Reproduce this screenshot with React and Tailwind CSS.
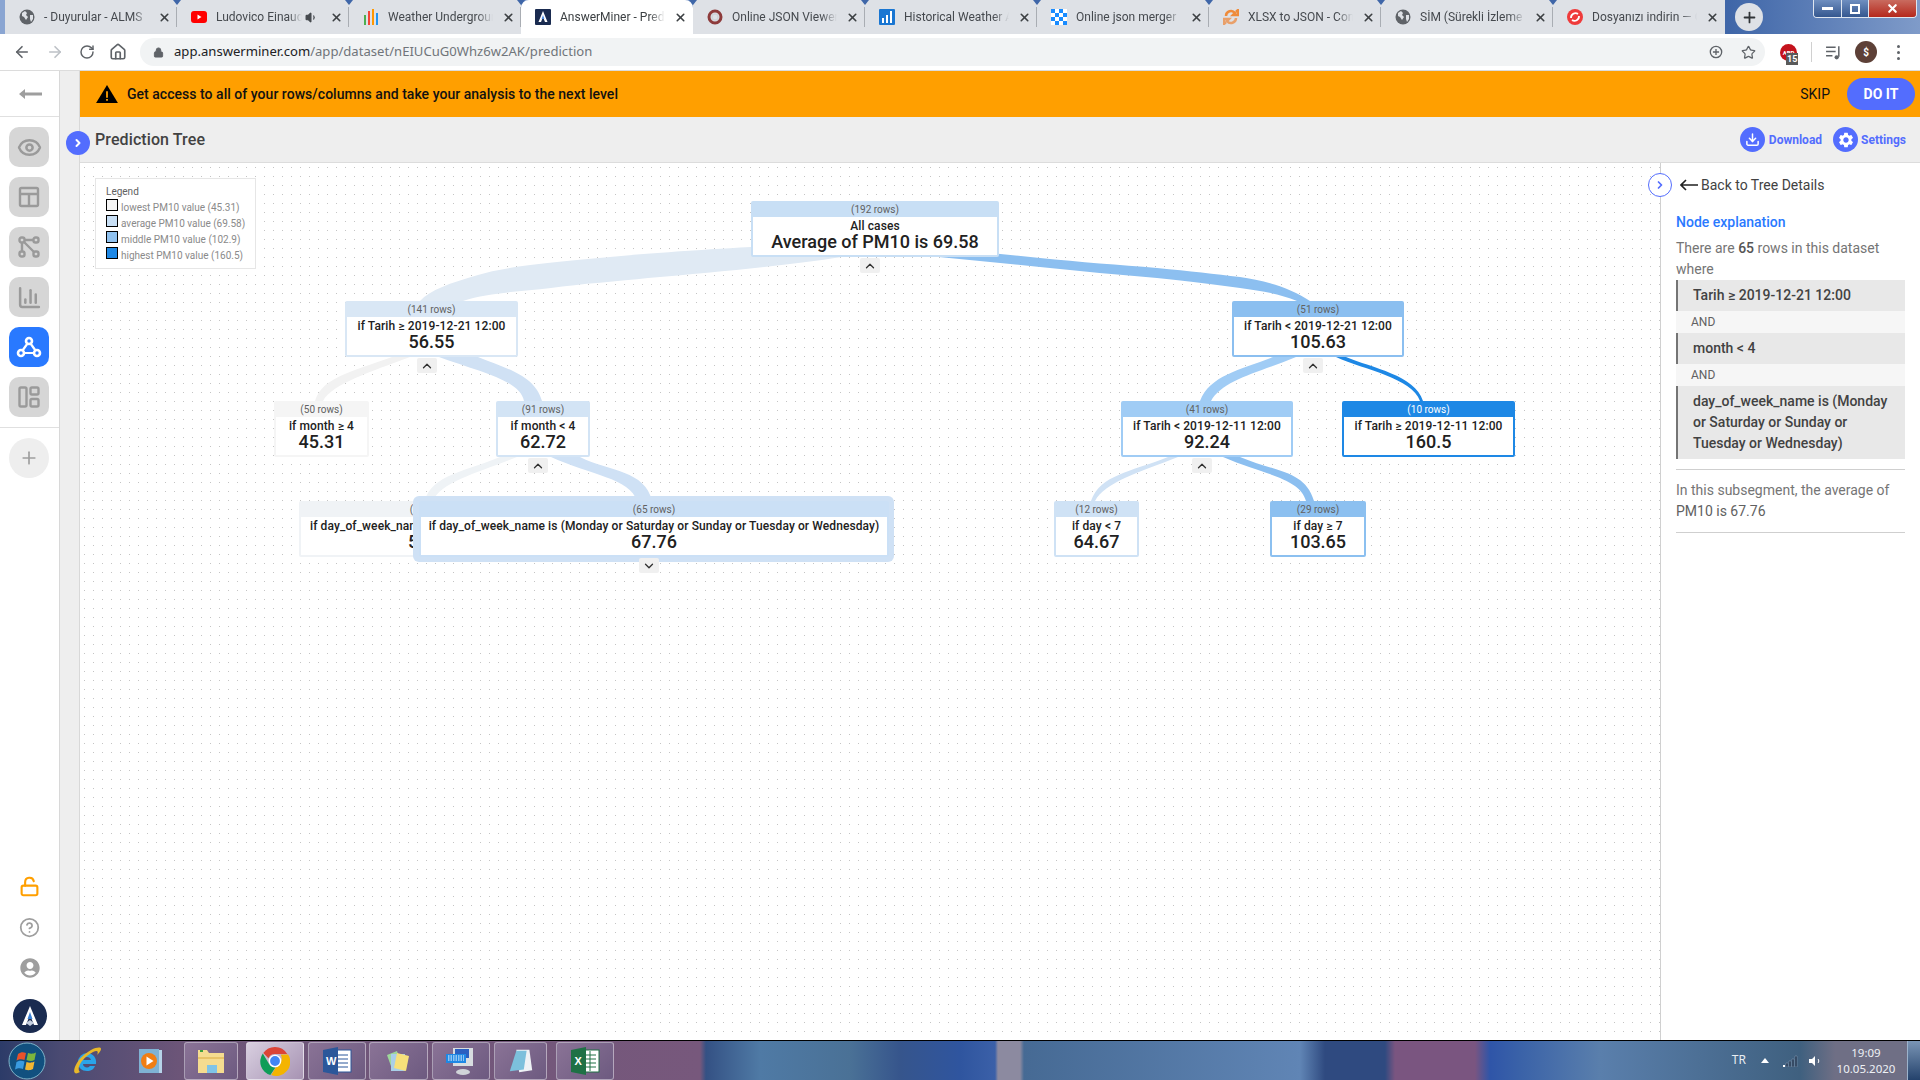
import React from 'react'
import { ArrowLeft, ArrowRight, RotateCw, Home, Lock, Star, X, Plus, ChevronRight, ChevronUp, ChevronDown, Eye, ChartColumn, HelpCircle, Volume1, LockOpen, Download } from 'lucide-react'
import { FaUserCircle } from 'react-icons/fa'
import { MdSettings } from 'react-icons/md'

const Globe = () => (
  <svg viewBox="0 0 16 16" className="w-4 h-4"><circle cx="8" cy="8" r="7.5" fill="#5f6368" /><path d="M3 4l3-2 2 2-1 2 2 2-2 3-2-3-2-1zM11 6l3 0 0 4-2 3-1-3z" fill="#dee1e6" /></svg>
)
const YouTube = () => (
  <svg viewBox="0 0 16 16" className="w-4 h-4"><rect x="0" y="2" width="16" height="12" rx="3" fill="#f00" /><path d="M6.5 5.5l4 2.5-4 2.5z" fill="#fff" /></svg>
)
const BarsColor = () => (
  <svg viewBox="0 0 16 16" className="w-4 h-4"><rect x="1" y="6" width="2" height="10" fill="#4caf50" /><rect x="5" y="2" width="2" height="14" fill="#f44336" /><rect x="9" y="0" width="2" height="16" fill="#ff9800" /><rect x="13" y="4" width="2" height="12" fill="#2196f3" /></svg>
)
const AmLogo = ({ size = 'w-4 h-4' }) => (
  <svg viewBox="0 0 16 16" className={size}><rect width="16" height="16" rx="1" fill="#1a2b50" /><path d="M8 2l4.5 11H10L8 8 6 13H3.5z" fill="#fff" /><path d="M8 6l1.4 4H6.600z" fill="#4f8fe6" /></svg>
)
const OperaRing = () => (
  <svg viewBox="0 0 16 16" className="w-4 h-4"><circle cx="8" cy="8" r="6" fill="none" stroke="#8d3b3b" strokeWidth="3" /><circle cx="8" cy="8" r="3" fill="none" stroke="#cfd3d8" strokeWidth="1.5" /></svg>
)
const BlueBars = () => (
  <svg viewBox="0 0 16 16" className="w-4 h-4"><rect width="16" height="16" rx="1" fill="#1976d2" /><rect x="3" y="9" width="2" height="5" fill="#fff" /><rect x="7" y="6" width="2" height="8" fill="#fff" /><rect x="11" y="2" width="2" height="12" fill="#fff" /></svg>
)
const Checker = () => (
  <svg viewBox="0 0 16 16" className="w-4 h-4"><rect width="16" height="16" fill="#fff" /><path d="M0 0h4v4H0zM8 0h4v4H8zM4 4h4v4H4zM12 4h4v4h-4zM0 8h4v4H0zM8 8h4v4H8zM4 12h4v4H4zM12 12h4v4h-4z" fill="#1a8cff" /></svg>
)
const OrangeSync = () => (
  <svg viewBox="0 0 16 16" className="w-4 h-4"><path d="M3 7a5 5 0 0 1 9-3l-2 2h5V1l-2 2" fill="none" stroke="#ef8b3a" strokeWidth="2.500" /><path d="M13 9a5 5 0 0 1-9 3l2-2H1v5l2-2" fill="none" stroke="#e9a06a" strokeWidth="2.500" /></svg>
)
const RedSync = () => (
  <svg viewBox="0 0 16 16" className="w-4 h-4"><circle cx="8" cy="8" r="8" fill="#ef3b3b" /><path d="M4 9a4.500 4.500 0 0 1 7-4M12 7a4.500 4.500 0 0 1-7 4" fill="none" stroke="#fff" strokeWidth="1.800" /></svg>
)

const tabs = [
  { title: '- Duyurular - ALMS', icon: <Globe /> },
  { title: 'Ludovico Einaudi', icon: <YouTube />, audio: true },
  { title: 'Weather Underground', icon: <BarsColor /> },
  { title: 'AnswerMiner - Prediction', icon: <AmLogo />, active: true },
  { title: 'Online JSON Viewer', icon: <OperaRing /> },
  { title: 'Historical Weather API', icon: <BlueBars /> },
  { title: 'Online json merger', icon: <Checker /> },
  { title: 'XLSX to JSON - Convert', icon: <OrangeSync /> },
  { title: 'SİM (Sürekli İzleme Merkezi)', icon: <Globe /> },
  { title: 'Dosyanızı indirin — Online', icon: <RedSync /> },
]

function Tab({ tab, last }) {
  return (
    <div className={`relative w-[172px] h-[34px] shrink-0 flex items-center pl-[14px] pr-[6px] text-[12px] font-['Roboto',sans-serif] ${tab.active ? 'bg-white rounded-t-[8px] text-[#3c4043] z-10' : 'bg-[#dee1e6] text-[#45494e]'}`}>
      <span className="shrink-0 w-4 h-4">{tab.icon}</span>
      <span className={`ml-[9px] whitespace-nowrap overflow-hidden [mask-image:linear-gradient(to_right,black_85%,transparent)] ${tab.audio ? 'w-[86px]' : 'w-[105px]'}`}>{tab.title}</span>
      {tab.audio && <Volume1 className="w-[13px] h-[13px] ml-[3px] shrink-0 text-[#45494e]" fill="#45494e" />}
      <X className="w-[13px] h-[13px] ml-auto shrink-0 text-[#3c4043]" strokeWidth={3} />
      {!last && !tab.active && <span className="absolute right-0 top-[7px] h-[20px] w-px bg-[#a9adb3]" />}
      {!last && <span className="absolute right-[-4px] top-0 w-0 h-0 border-x-[4px] border-x-transparent border-t-[5px] border-t-[#3f66a8] z-20" />}
    </div>
  )
}

function TabBar() {
  return (
    <div className="h-[34px] flex items-start pl-[5px] bg-[linear-gradient(to_right,#8aa5d2_0%,#8aa5d2_1%,#3f66a8_90%,#7f9bc9_100%)]">
      {tabs.map((t, i) => <Tab key={i} tab={t} last={i === tabs.length - 1} />)}
      <div className="ml-[10px] mt-[3px] w-[28px] h-[28px] rounded-full bg-[#dee1e6] flex items-center justify-center">
        <Plus className="w-[17px] h-[17px] text-[#303438]" strokeWidth={2.5} />
      </div>
      <div className="ml-auto mr-[3px] h-[18px] flex rounded-b-[4px] border border-t-0 border-[#dfe6f0] overflow-hidden">
        <div className="w-[28px] bg-[linear-gradient(#6f8fc0,#35578f)] flex items-center justify-center border-r border-[#dfe6f0]"><span className="w-[11px] h-[3px] bg-white" /></div>
        <div className="w-[27px] bg-[linear-gradient(#6f8fc0,#35578f)] flex items-center justify-center border-r border-[#dfe6f0]"><span className="w-[10px] h-[10px] border-2 border-white" /></div>
        <div className="w-[47px] bg-[linear-gradient(#c96b5f,#b5281c)] flex items-center justify-center"><X className="w-[13px] h-[13px] text-white" strokeWidth={4} /></div>
      </div>
    </div>
  )
}

function Toolbar() {
  return (
    <div className="h-[37px] bg-white border-b border-[#dcdcdc] flex items-center text-[#5f6368]">
      <ArrowLeft className="w-[18px] h-[18px] ml-[13px]" strokeWidth={2.2} />
      <ArrowRight className="w-[18px] h-[18px] ml-[15px] text-[#bdc1c6]" strokeWidth={2.2} />
      <RotateCw className="w-[16px] h-[16px] ml-[15px]" strokeWidth={2.2} />
      <Home className="w-[18px] h-[18px] ml-[14px]" strokeWidth={2.2} />
      <div className="ml-[13px] w-[1625px] h-[28px] rounded-full bg-[#f1f3f4] flex items-center pl-[13px] pr-[9px] font-['Noto_Sans',sans-serif]">
        <Lock className="w-[11px] h-[11px] text-[#5f6368]" fill="#5f6368" />
        <span className="ml-[10px] text-[13.1px] text-[#202124]">app.answerminer.com<span className="text-[#70757a]">/app/dataset/nEIUCuG0Whz6w2AK/prediction</span></span>
        <span className="ml-auto flex items-center gap-[18px]">
          <svg viewBox="0 0 16 16" className="w-[14px] h-[14px]"><circle cx="8" cy="8" r="6.500" fill="none" stroke="#5f6368" strokeWidth="1.500" /><path d="M8 4.500v7M4.500 8h7" stroke="#5f6368" strokeWidth="1.500" /></svg>
          <Star className="w-[15px] h-[15px] text-[#5f6368]" strokeWidth={2} />
        </span>
      </div>
      <div className="relative ml-[15px] w-[17px] h-[17px] rounded-full bg-[#c4121c] flex items-center justify-center">
        <span className="text-[6px] font-bold text-white">ABP</span>
        <span className="absolute left-[6px] top-[9px] px-[1px] bg-[#5a5a5a] text-white text-[9px] leading-[12px] font-bold">15</span>
      </div>
      <span className="ml-[14px] h-[20px] w-px bg-[#d0d0d0]" />
      <svg viewBox="0 0 16 16" className="w-[17px] h-[17px] ml-[13px]"><path d="M1 3h9M1 7h9M1 11h6" stroke="#5f6368" strokeWidth="1.400" /><path d="M13 2v10" stroke="#5f6368" strokeWidth="1.400" /><circle cx="11" cy="12.500" r="2" fill="#5f6368" /></svg>
      <div className="ml-[13px] w-[22px] h-[22px] rounded-full bg-[#5d4037] flex items-center justify-center text-white text-[10px] font-bold">$</div>
      <div className="ml-[20px] flex flex-col gap-[3px]">
        <span className="w-[3px] h-[3px] rounded-full bg-[#5f6368]" />
        <span className="w-[3px] h-[3px] rounded-full bg-[#5f6368]" />
        <span className="w-[3px] h-[3px] rounded-full bg-[#5f6368]" />
      </div>
    </div>
  )
}

function SideBtn({ active, children }) {
  return (
    <div className={`w-[40px] h-[40px] rounded-[10px] flex items-center justify-center ${active ? 'bg-[#2979ff] text-white' : 'bg-[#d6d6d6] text-[#9a9a9a]'}`}>
      {children}
    </div>
  )
}

function Sidebar() {
  return (
    <div className="w-[60px] shrink-0 bg-white border-r border-[#d8d8d8] flex flex-col">
      <div className="h-[46px] border-b border-[#e0e0e0] flex items-center justify-center">
        <svg viewBox="0 0 24 12" className="w-[24px] h-[12px]"><path d="M7 1L1 6l6 5V7.500h17v-3H7z" fill="#9e9e9e" /></svg>
      </div>
      <div className="pt-[10px] pl-[9px] flex flex-col gap-[10px]">
        <SideBtn><Eye className="w-[25px] h-[25px]" strokeWidth={2.4} /></SideBtn>
        <SideBtn>
          <svg viewBox="0 0 24 24" className="w-[24px] h-[24px]" fill="none" stroke="currentColor" strokeWidth="2.400"><rect x="3" y="3" width="18" height="18" rx="1.500" /><path d="M3 9h18M12 9v12" /></svg>
        </SideBtn>
        <SideBtn>
          <svg viewBox="0 0 24 24" className="w-[24px] h-[24px]" fill="none" stroke="currentColor" strokeWidth="2.400"><rect x="2.500" y="2.500" width="5" height="5" rx="2" /><rect x="16.500" y="2.500" width="5" height="5" rx="2" /><rect x="2.500" y="16.500" width="5" height="5" rx="2" /><rect x="16.500" y="16.500" width="5" height="5" rx="2" /><path d="M7.500 5h9M5 7.500v9M7 7l10 10" /></svg>
        </SideBtn>
        <SideBtn><ChartColumn className="w-[25px] h-[25px]" strokeWidth={2.4} /></SideBtn>
        <SideBtn active>
          <svg viewBox="0 0 26 24" className="w-[26px] h-[24px]" fill="none" stroke="currentColor" strokeWidth="2.600"><circle cx="13" cy="6" r="3" /><circle cx="5" cy="18" r="3" /><circle cx="21" cy="18" r="3" /><path d="M11.500 8.500L6.500 15.500M14.500 8.500l5 7M8 18h10" strokeWidth="2.200" /></svg>
        </SideBtn>
        <SideBtn>
          <svg viewBox="0 0 24 24" className="w-[24px] h-[24px]" fill="none" stroke="currentColor" strokeWidth="2.400"><rect x="2.500" y="2.500" width="7" height="19" rx="1.500" /><rect x="13.500" y="2.500" width="8" height="7" rx="1.500" /><rect x="13.500" y="14" width="8" height="7.500" rx="1.500" /></svg>
        </SideBtn>
      </div>
      <div className="mt-[10px] border-t border-[#e0e0e0] pt-[10px] pl-[9px]">
        <div className="w-[40px] h-[40px] rounded-full bg-[#eeeeee] flex items-center justify-center">
          <Plus className="w-[20px] h-[20px] text-[#9e9e9e]" strokeWidth={2} />
        </div>
      </div>
      <div className="mt-auto pb-[7px] flex flex-col items-center gap-[20px]">
        <LockOpen className="w-[21px] h-[21px] text-[#ff9f00]" strokeWidth={2.4} />
        <HelpCircle className="w-[21px] h-[21px] text-[#9e9e9e]" strokeWidth={2} />
        <FaUserCircle className="w-[20px] h-[20px] text-[#9e9e9e]" />
        <div className="w-[34px] h-[34px] rounded-full bg-[#1a2b50] flex items-center justify-center mt-px">
          <svg viewBox="0 0 20 22" className="w-[20px] h-[22px]"><path d="M10 1l8 19h-4L10 10 6 20H2z" fill="#fff" /><path d="M10 7l2.500 7h-5z" fill="#3b82d6" /><path d="M6 18l4-3 4 3-4 3z" fill="#c5cfe0" /></svg>
        </div>
      </div>
    </div>
  )
}

const links = [
  ['M751 247C680 251 640 254 599 258C540 263 500 268 478 275C450 283 430 290 420 301L463 301C490 292 520 292 551 288C580 284 620 281 648 278C720 272 790 265 842 257Z', '#e0eaf4'],
  ['M960 250L1040 258C1080 262 1120 265 1157 268C1190 271 1215 274 1240 277C1262 280 1290 287 1310 301L1297 301C1280 294 1262 291 1240 288C1215 285 1190 281 1157 278C1120 275 1080 271 1040 267L939 257Z', '#8cbff0'],
  ['M392 357C350 372 322 378 315 401L323 401C332 384 370 372 410 357Z', '#f2f2f2'],
  ['M439 357C480 372 520 380 524 401L542 401C535 375 505 368 478 357Z', '#d0e1f4'],
  ['M500 457C470 470 430 475 425 501L433 501C440 482 480 472 517 457Z', '#eff3f6'],
  ['M551 457C590 475 630 478 637 501L652 501C645 470 610 472 580 457Z', '#cfe1f5'],
  ['M1273 357C1240 370 1210 375 1200 401L1211 401C1222 380 1260 372 1296 357Z', '#a0ccf5'],
  ['M1336 357C1365 370 1412 378 1420 401L1423 401C1415 375 1372 368 1346 357Z', '#1e88e5'],
  ['M1168 457C1130 472 1100 475 1091 501L1095 501C1105 482 1140 472 1178 457Z', '#d0e2f5'],
  ['M1223 457C1265 475 1300 478 1306 501L1314 501C1305 470 1275 472 1240 457Z', '#8cbff0'],
]

const nodes = [
  { rows: '192 rows', label: 'All cases', value: 'Average of PM10 is 69.58', pos: 'left-[671px] top-[38px] w-[248px]', border: 'border-[#c8dff5]', head: 'bg-[#c8dff5]' },
  { rows: '141 rows', label: 'if Tarih ≥ 2019-12-21 12:00', value: '56.55', pos: 'left-[265px] top-[138px] w-[173px]', border: 'border-[#d9e7f5]', head: 'bg-[#d9e7f5]' },
  { rows: '50 rows', label: 'if month ≥ 4', value: '45.31', pos: 'left-[194px] top-[238px] w-[95px]', border: 'border-[#f5f5f5]', head: 'bg-[#f5f5f5]' },
  { rows: '91 rows', label: 'if month < 4', value: '62.72', pos: 'left-[416px] top-[238px] w-[94px]', border: 'border-[#d3e4f5]', head: 'bg-[#d3e4f5]' },
  { rows: '26 rows', label: 'if day_of_week_name is (Friday or Thursday)', value: '50.12', pos: 'left-[219px] top-[338px] w-[264px]', border: 'border-[#f0f3f6]', head: 'bg-[#f0f3f6]' },
  { rows: '51 rows', label: 'if Tarih < 2019-12-21 12:00', value: '105.63', pos: 'left-[1152px] top-[138px] w-[172px]', border: 'border-[#8bbff0]', head: 'bg-[#8bbff0]' },
  { rows: '41 rows', label: 'if Tarih < 2019-12-11 12:00', value: '92.24', pos: 'left-[1041px] top-[238px] w-[172px]', border: 'border-[#a0ccf5]', head: 'bg-[#a0ccf5]' },
  { rows: '10 rows', label: 'if Tarih ≥ 2019-12-11 12:00', value: '160.5', pos: 'left-[1262px] top-[238px] w-[173px]', border: 'border-[#1e88e5]', head: 'bg-[#1e88e5] text-white', },
  { rows: '12 rows', label: 'if day < 7', value: '64.67', pos: 'left-[974px] top-[338px] w-[85px]', border: 'border-[#cfe2f5]', head: 'bg-[#cfe2f5]' },
  { rows: '29 rows', label: 'if day ≥ 7', value: '103.65', pos: 'left-[1190px] top-[338px] w-[96px]', border: 'border-[#8cc0f0]', head: 'bg-[#8cc0f0]' },
]

const toggles = [
  { pos: 'left-[780px] top-[95px]' },
  { pos: 'left-[337px] top-[195px]' },
  { pos: 'left-[448px] top-[295px]' },
  { pos: 'left-[1223px] top-[195px]' },
  { pos: 'left-[1112px] top-[295px]' },
]

function NodeBody({ n }) {
  return (
    <>
      <div className={`h-[14px] text-[10px] leading-[14px] text-center whitespace-nowrap ${n.head.includes('text-white') ? '' : 'text-[#616161]'} ${n.head}`}>({n.rows})</div>
      <div className="bg-white h-[38px] pt-[1px] text-center whitespace-nowrap text-[#212121]">
        <div className="text-[12px] leading-[16px] font-medium tracking-[0.1px]">{n.label}</div>
        <div className="text-[18px] leading-[16px] font-medium">{n.value}</div>
      </div>
    </>
  )
}

function Legend() {
  const items = [
    ['lowest PM10 value (45.31)', 'bg-[#f5f5f5]'],
    ['average PM10 value (69.58)', 'bg-[#c8dff5]'],
    ['middle PM10 value (102.9)', 'bg-[#90c2f0]'],
    ['highest PM10 value (160.5)', 'bg-[#1e88e5]'],
  ]
  return (
    <div className="absolute left-[15px] top-[15px] w-[161px] h-[91px] bg-white border border-[#e6e6e6] pl-[10px] pt-[7px] z-10">
      <div className="text-[10px] leading-[12px] text-[#616161]">Legend</div>
      <div className="mt-[1px] flex flex-col gap-[4px]">
        {items.map(([t, c]) => (
          <div key={t} className="flex items-center h-[12px] text-[10px] text-[#8a8a8a] whitespace-nowrap">
            <span className={`w-[12px] h-[12px] border border-black shrink-0 ${c}`} />
            <span className="ml-[3px] relative top-[2px]">{t}</span>
          </div>
        ))}
      </div>
    </div>
  )
}

function Canvas() {
  return (
    <div className="relative w-[1580px] h-full overflow-hidden bg-white bg-[radial-gradient(#c4c4c4_0.7px,transparent_0.7px)] bg-[length:9px_9px]">
      <Legend />
      <svg viewBox="80 163 1580 877" className="absolute left-0 top-0 w-[1580px] h-[877px]">
        {links.map(([d, c], i) => <path key={i} d={d} fill={c} />)}
      </svg>
      {nodes.map((n) => (
        <div key={n.rows} className={`absolute h-[56px] border-2 rounded-[2px] ${n.pos} ${n.border}`}>
          <NodeBody n={n} />
        </div>
      ))}
      {toggles.map((t) => (
        <div key={t.pos} className={`absolute w-[20px] h-[15px] bg-[#f0f0f0] rounded-[2px] flex items-center justify-center ${t.pos}`}>
          <ChevronUp className="w-[14px] h-[14px] text-[#303030]" strokeWidth={2.2} />
        </div>
      ))}
      <div className="absolute left-[333px] top-[333px] w-[481px] h-[66px] rounded-[6px] bg-[#cfe1f5] p-[5px] pl-[6px]">
        <div className="h-[56px] border-2 border-[#cbe0f6] rounded-[2px]">
          <NodeBody n={{ rows: '65 rows', label: 'if day_of_week_name is (Monday or Saturday or Sunday or Tuesday or Wednesday)', value: '67.76', head: 'bg-[#cbe0f6]' }} />
        </div>
      </div>
      <div className="absolute left-[559px] top-[395px] w-[20px] h-[15px] bg-[#f0f0f0] rounded-[2px] flex items-center justify-center">
        <ChevronDown className="w-[14px] h-[14px] text-[#303030]" strokeWidth={2.2} />
      </div>
    </div>
  )
}

function Panel() {
  const cond = 'bg-[#e8e8e8] border-l-2 border-[#757575] pl-[15px] pr-[8px] font-medium text-[#424242]'
  const and = 'h-[22px] bg-[#f6f6f6] pl-[15px] text-[12px] leading-[22px] text-[#616161]'
  return (
    <div className="w-[260px] h-full bg-white border-l border-[#d0d0d0] pl-[15px] pt-[12px] text-[14px] leading-[21px] text-[#757575]">
      <div className="h-[20px] flex items-center pl-[4px] text-[#424242] leading-[20px]">
        <svg viewBox="0 0 18 12" className="w-[18px] h-[12px] text-[#212121]"><path d="M6 1L1 6l5 5M1 6h17" fill="none" stroke="currentColor" strokeWidth="1.600" /></svg>
        <span className="ml-[3px]">Back to Tree Details</span>
      </div>
      <div className="mt-[17px] h-[20px] leading-[20px] font-medium text-[#2979ff]">Node explanation</div>
      <div className="w-[229px]">
        <p className="mt-[6px] h-[42px]">There are <span className="text-[#555555] font-medium">65</span> rows in this dataset where</p>
        <div className={`h-[31px] leading-[31px] ${cond}`}>Tarih ≥ 2019-12-21 12:00</div>
        <div className={and}>AND</div>
        <div className={`h-[31px] leading-[31px] ${cond}`}>month &lt; 4</div>
        <div className={and}>AND</div>
        <div className={`py-[5px] ${cond}`}>day_of_week_name is (Monday or Saturday or Sunday or Tuesday or Wednesday)</div>
        <div className="mt-[10px] border-t border-[#cfcfcf]" />
        <p className="mt-[10px]">In this subsegment, the average of <span className="text-[#616161]">PM10 is 67.76</span></p>
        <div className="mt-[10px] border-t border-[#cfcfcf]" />
      </div>
    </div>
  )
}

function Main() {
  return (
    <div className="flex-1 flex flex-col min-w-0">
      <div className="h-[46px] bg-[#ff9f00] flex items-center pl-[16px] pr-[5px] text-[14px] font-medium text-[#111]">
        <svg viewBox="0 0 24 22" className="w-[22px] h-[20px]"><path d="M12 1L24 21H0z" fill="#000" /><path d="M11 8h2v7h-2zM11 16.500h2v2h-2z" fill="#ff9f00" /></svg>
        <span className="ml-[9px] tracking-[0.03px]">Get access to all of your rows/columns and take your analysis to the next level</span>
        <span className="ml-auto font-normal text-[14px]">SKIP</span>
        <div className="ml-[17px] w-[68px] h-[32px] rounded-full bg-[#536dfe] text-white text-[14px] font-bold flex items-center justify-center">DO IT</div>
      </div>
      <div className="h-[46px] bg-[#eeeeee] border-b border-[#dcdcdc] flex items-center pl-[15px] pr-[14px]">
        <span className="text-[16px] font-medium text-[#424242] tracking-[0.1px]">Prediction Tree</span>
        <div className="ml-auto flex items-center text-[12px] font-bold text-[#536dfe]">
          <span className="w-[25px] h-[25px] rounded-full bg-[#536dfe] flex items-center justify-center"><Download className="w-[15px] h-[15px] text-white" strokeWidth={2.4} /></span>
          <span className="ml-[4px]">Download</span>
          <span className="ml-[11px] w-[25px] h-[25px] rounded-full bg-[#536dfe] flex items-center justify-center"><MdSettings className="w-[18px] h-[18px] text-white" /></span>
          <span className="ml-[3px]">Settings</span>
        </div>
      </div>
      <div className="flex-1 flex min-h-0">
        <Canvas />
        <Panel />
      </div>
    </div>
  )
}

function TaskBtn({ active, width, children }) {
  return (
    <div className={`h-[38px] rounded-[3px] border border-white/40 flex items-center justify-center shrink-0 ${width} ${active ? 'bg-[linear-gradient(135deg,#d8cfe0,#a793b3)]' : 'bg-[linear-gradient(135deg,#8a7396,#6d5a80)]'}`}>
      {children}
    </div>
  )
}

function Taskbar() {
  return (
    <div className="relative h-[40px] border-t border-black flex items-center font-['Noto_Sans',sans-serif] bg-[linear-gradient(to_right,#2c3b68_0px,#4a4a72_60px,#6c5578_180px,#77587c_700px,#345184_706px,#4f7aa5_760px,#4a7196_850px,#36558c_900px,#2f559f_960px,#3b60a8_995px,#8c8aa0_998px,#8c8aa0_1020px,#466a94_1024px,#6085b5_1300px,#2f4a80_1325px,#2f4a80_1385px,#7a5580_1395px,#7a5580_1475px,#2f55a8_1490px,#3a62a8_1520px,#5a7fac_1600px,#3f607f_1800px,#6f6f85_1835px,#6f6f85_1905px)]">
      <div className="w-[54px] pl-[8px] shrink-0">
        <svg viewBox="0 0 38 38" className="w-[38px] h-[38px]">
          <circle cx="19" cy="19" r="18" fill="#11507f" stroke="#7fb3c8" strokeWidth="1" />
          <path d="M10 12c3-2 5-2 8-1l-1.500 7c-3-1-5-1-8 .5z" fill="#e8522a" />
          <path d="M20 11c3 1 5 1 8-.5L26.500 18c-3 1.500-5 1-8 0z" fill="#7cb53c" />
          <path d="M8.500 20c3-1.500 5-1.500 8-.5L15 27c-3-1-5-1-8 .5z" fill="#3a9be0" />
          <path d="M18.500 20c3 1 5 1 8-.5L25 27c-3 1.500-5 1.500-8 .5z" fill="#f2b632" />
        </svg>
      </div>
      <div className="w-[64px] shrink-0 flex justify-center pl-[2px]">
        <svg viewBox="0 0 32 32" className="w-[32px] h-[32px]">
          <path d="M16 8a9 9 0 0 0-9 9c0 6 4 9 9 9 4 0 7-2 8-5h-5c-1 1-2 1.500-3 1.500-2 0-4-1.500-4-3.500h13c1-6-3-11-9-11zM12 15c.5-2 2-3 4-3s3.500 1 4 3z" fill="#2aa4e8" />
          <path d="M4 28C1 25 7 12 20 5c6-3 10-3 10-1 0 2-3 5-4 6 2-4 0-5-4-3C11 13 5 23 9 27c-2 1-4 2-5 1z" fill="#e8b82a" />
        </svg>
      </div>
      <div className="w-[64px] shrink-0 flex justify-center">
        <svg viewBox="0 0 28 28" className="w-[28px] h-[28px]"><rect x="6" y="3" width="20" height="23" fill="#b6d3e8" /><rect x="3" y="2" width="20" height="24" fill="#7fb2d4" /><circle cx="13" cy="14" r="8" fill="#f07e14" /><path d="M10.500 9.500l7 4.500-7 4.500z" fill="#fff" /></svg>
      </div>
      <TaskBtn width="w-[54px] ml-[2px]">
        <svg viewBox="0 0 32 28" className="w-[32px] h-[28px]"><path d="M3 3h9l2 3h15v20H3z" fill="#f5dc90" /><rect x="3" y="10" width="26" height="2" fill="#e8c468" /><path d="M12 26v-8h10v8" fill="#7fc4e8" /><rect x="5" y="3" width="3" height="2" fill="#3ea03e" /></svg>
      </TaskBtn>
      <TaskBtn active width="w-[58px] ml-[8px]">
        <svg viewBox="0 0 32 32" className="w-[30px] h-[30px]">
          <path d="M16 1a15 15 0 0 1 13 7.500H16a7.500 7.500 0 0 0-7 4.500L3.500 7.500A15 15 0 0 1 16 1z" fill="#db4437" />
          <path d="M3 8l6.500 11a7.500 7.500 0 0 0 7 4L11 31A15 15 0 0 1 3 8z" fill="#0f9d58" />
          <path d="M30 9a15 15 0 0 1-18 22l6.500-11A7.500 7.500 0 0 0 22 9z" fill="#f4b400" />
          <circle cx="16" cy="16" r="6" fill="#4285f4" stroke="#fff" strokeWidth="1.500" />
        </svg>
      </TaskBtn>
      <TaskBtn width="w-[58px] ml-[4px]">
        <svg viewBox="0 0 30 30" className="w-[30px] h-[30px]"><rect x="12" y="4" width="17" height="22" fill="#fff" stroke="#2b579a" /><path d="M15 9h11M15 13h11M15 17h11M15 21h11" stroke="#2b579a" /><path d="M1 4l15-3v28L1 26z" fill="#2b579a" /><text x="4" y="19" fontSize="11" fontWeight="700" fill="#fff" fontFamily="Liberation Sans, sans-serif">W</text></svg>
      </TaskBtn>
      <TaskBtn width="w-[59px] ml-[3px]">
        <svg viewBox="0 0 30 30" className="w-[30px] h-[30px]"><path d="M3 9l10-4 5 15-10 3z" fill="#9ed89a" /><rect x="7" y="8" width="14" height="17" fill="#a9cfe8" /><path d="M13 7l12 3-3 15-12-3z" fill="#f7e07a" /></svg>
      </TaskBtn>
      <TaskBtn width="w-[58px] ml-[4px]">
        <svg viewBox="0 0 32 32" className="w-[32px] h-[32px]"><path d="M8 3l20 0 0 18-20 0z" fill="#d8dde0" /><rect x="10" y="4" width="14" height="9" fill="#2a5fc0" /><rect x="1" y="9" width="20" height="9" fill="#1e88e5" /><path d="M3 11h16M3 13h16M3 15h16" stroke="#fff" strokeDasharray="1.500 1" /><ellipse cx="18" cy="27" rx="7" ry="3" fill="#d0d4d8" /></svg>
      </TaskBtn>
      <TaskBtn width="w-[53px] ml-[4px]">
        <svg viewBox="0 0 30 30" className="w-[28px] h-[28px]"><path d="M10 3h14l3 22-14 2z" fill="#eef2f5" /><path d="M10 4h11l-3 20-15 2z" fill="#7cc0dc" /></svg>
      </TaskBtn>
      <TaskBtn width="w-[58px] ml-[9px]">
        <svg viewBox="0 0 30 30" className="w-[30px] h-[30px]"><rect x="12" y="4" width="17" height="22" fill="#fff" stroke="#1e7145" /><path d="M15 9h11M15 13h11M15 17h11M15 21h11M20 5v20" stroke="#1e7145" /><path d="M1 4l15-3v28L1 26z" fill="#1e7145" /><text x="4.500" y="19" fontSize="11" fontWeight="700" fill="#fff" fontFamily="Liberation Sans, sans-serif">X</text></svg>
      </TaskBtn>

      <div className="ml-auto flex items-center h-full text-white text-[12px]">
        <span className="text-[#e8edf2] relative top-[-1px]">TR</span>
        <span className="ml-[15px] w-0 h-0 border-x-[4px] border-x-transparent border-b-[5px] border-b-white" />
        <svg viewBox="0 0 16 12" className="ml-[13px] w-[16px] h-[12px]"><path d="M1 10h2v2H1z" fill="#fff" /><path d="M4 8h2v4H4zM7 6h2v6H7zM10 4h2v8h-2zM13 1h2v11h-2z" fill="#1a2f4a" stroke="#8fa3b8" strokeWidth=".5" /></svg>
        <svg viewBox="0 0 14 14" className="ml-[10px] w-[14px] h-[14px]"><path d="M1 5h3l3-3v10L4 9H1z" fill="#fff" /><path d="M10 5c1 1 1 3 0 4" stroke="#fff" fill="none" /></svg>
        <div className="ml-[6px] w-[76px] flex flex-col items-center text-[11.5px] leading-[16px] text-[#eef1f5]">
          <span>19:09</span>
          <span>10.05.2020</span>
        </div>
        <div className="ml-[3px] w-[13px] h-full border-l border-[#9cb3cc] bg-[linear-gradient(#7a95b5,#24426c)]" />
      </div>
    </div>
  )
}

export default function App() {
  return (
    <div className="relative w-[1920px] h-[1080px] overflow-hidden flex flex-col bg-white font-['Roboto',sans-serif]">
      <TabBar />
      <Toolbar />
      <div className="flex-1 flex min-h-0">
        <Sidebar />
        <div className="w-[20px] shrink-0 bg-[#eeeeee] border-r border-[#d8d8d8]" />
        <Main />
      </div>
      <Taskbar />
      <div className="absolute left-[66px] top-[131px] w-[24px] h-[24px] rounded-full bg-[#536dfe] flex items-center justify-center z-30">
        <ChevronRight className="w-[12px] h-[12px] text-white" strokeWidth={4} />
      </div>
      <div className="absolute left-[1648px] top-[173px] w-[24px] h-[24px] rounded-full bg-white border border-[#536dfe] flex items-center justify-center z-30">
        <ChevronRight className="w-[12px] h-[12px] text-[#536dfe]" strokeWidth={3.5} />
      </div>
    </div>
  )
}
